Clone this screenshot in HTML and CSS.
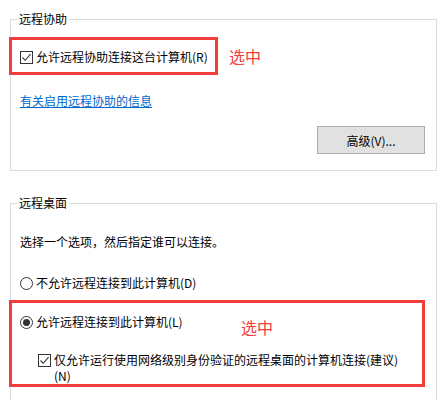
FILE: index.html
```html
<!DOCTYPE html>
<html lang="zh-CN">
<head>
<meta charset="utf-8">
<link rel="stylesheet" href="styles.css">
</head>
<body>
<div class="page">
  <fieldset class="group group-assist">
    <legend class="group-title">远程协助</legend>
    <div class="mark-row">
      <div class="red-box red-box-small">
        <div class="option">
          <span class="checkbox">
            <svg width="11" height="11" viewBox="0 0 11 11"><path d="M1.5 5.5 L4.2 8.3 L9.6 2.2" fill="none" stroke="#333" stroke-width="1.1"/></svg>
          </span>
          <span class="label">允许远程协助连接这台计算机(R)</span>
        </div>
      </div>
      <span class="note">选中</span>
    </div>
    <a class="link" href="#">有关启用远程协助的信息</a>
    <div class="btn-row">
      <button class="btn" type="button">高级(V)...</button>
    </div>
  </fieldset>

  <fieldset class="group group-desktop">
    <legend class="group-title">远程桌面</legend>
    <p class="hint">选择一个选项，然后指定谁可以连接。</p>
    <div class="option option-first">
      <span class="radio"></span>
      <span class="label">不允许远程连接到此计算机(D)</span>
    </div>
    <div class="red-box red-box-wide">
      <div class="option">
        <span class="radio radio-on"></span>
        <span class="label">允许远程连接到此计算机(L)</span>
      </div>
      <span class="note note-abs">选中</span>
      <div class="option option-sub">
        <span class="checkbox">
          <svg width="11" height="11" viewBox="0 0 11 11"><path d="M1.5 5.5 L4.2 8.3 L9.6 2.2" fill="none" stroke="#333" stroke-width="1.1"/></svg>
        </span>
        <span class="label label-multi">仅允许运行使用网络级别身份验证的远程桌面的计算机连接(建议)<br>(N)</span>
      </div>
    </div>
  </fieldset>
</div>
</body>
</html>
```

FILE: styles.css
```css
html, body {
  margin: 0;
  padding: 0;
  background: #ffffff;
}

body {
  font-family: "Noto Sans CJK SC", "Liberation Sans", sans-serif;
  font-size: 12px;
  line-height: 16px;
  color: #000000;
  overflow: hidden;
}

.page {
  padding: 11px 4px 0 10px;
}

.group {
  margin: 0;
  border: 1px solid #dcdcdc;
  padding: 0 11px 16px 9px;
  min-width: 0;
}

.group-desktop {
  margin-top: 24px;
  padding-bottom: 40px;
}

.group-title {
  padding: 0 2px;
  margin-left: -3px;
  font-size: 12px;
  line-height: 16px;
}

.mark-row {
  display: flex;
  align-items: center;
  margin-top: 10px;
  margin-left: -11px;
}

.red-box {
  border: 3px solid #f23b3b;
  box-sizing: border-box;
}

.red-box-small {
  width: 209px;
  padding: 9px 0 7px 8px;
}

.red-box-wide {
  position: relative;
  margin-top: 9px;
  margin-left: -11px;
  padding: 11px 0 0 8px;
}

.note {
  color: #f23b3b;
  font-size: 16px;
  line-height: 16px;
  margin-left: 11px;
}

.note-abs {
  position: absolute;
  left: 229px;
  top: 16px;
  margin: 0;
}

.option {
  display: flex;
  align-items: flex-start;
  white-space: nowrap;
}

.option-first {
  margin-top: 25px;
}

.option-sub {
  margin-top: 22px;
  padding-left: 18px;
}

.checkbox {
  box-sizing: border-box;
  width: 13px;
  height: 13px;
  margin-top: 2px;
  border: 1px solid #333333;
  background: #ffffff;
  display: flex;
  align-items: center;
  justify-content: center;
  flex: none;
}

.radio {
  box-sizing: border-box;
  width: 13px;
  height: 13px;
  margin-top: 2px;
  border: 1px solid #333333;
  border-radius: 50%;
  background: #ffffff;
  display: flex;
  align-items: center;
  justify-content: center;
  flex: none;
}

.radio-on::after {
  content: "";
  width: 7px;
  height: 7px;
  border-radius: 50%;
  background: #333333;
}

.label {
  margin-left: 3px;
}

.link {
  display: block;
  width: max-content;
  margin-top: 18px;
  color: #0066cc;
  text-decoration: underline;
}

.btn-row {
  display: flex;
  justify-content: flex-end;
  margin-top: 17px;
}

.btn {
  box-sizing: border-box;
  width: 108px;
  height: 28px;
  border: 1px solid #adadad;
  background: #e1e1e1;
  font-family: inherit;
  font-size: 12px;
  color: #000000;
  padding: 0;
}

.hint {
  margin: 23px 0 0 0;
}
```
